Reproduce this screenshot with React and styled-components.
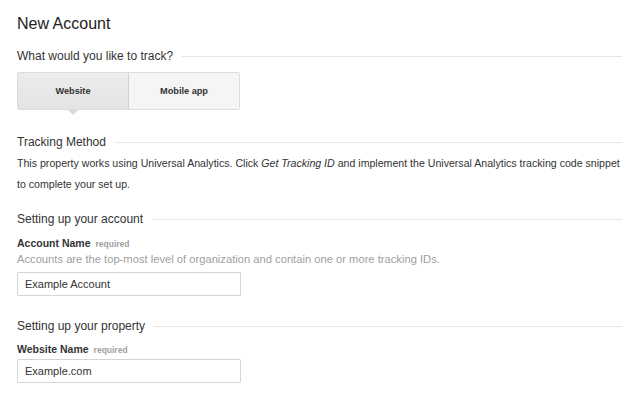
import React from 'react';
import styled, { createGlobalStyle } from 'styled-components';

const GlobalStyle = createGlobalStyle`
    html, body {
        margin: 0;
        padding: 0;
        background: #ffffff;
    }
    body {
        font-family: 'Liberation Sans', Arial, Helvetica, sans-serif;
        color: #333;
    }
`

const trackOptions = [
    { key: 'web', label: 'Website', selected: true },
    { key: 'app', label: 'Mobile app', selected: false },
]

const App = () => {
    return (
        <Page>
            <GlobalStyle />
            <Title>New Account</Title>

            <SectionHeader top={14}>What would you like to track?</SectionHeader>
            <Tabs>
                {
                    trackOptions.map(item => (
                        <Tab key={item.key} selected={item.selected}>
                            {item.label}
                        </Tab>
                    ))
                }
            </Tabs>

            <SectionHeader top={24}>Tracking Method</SectionHeader>
            <Paragraph>
                This property works using Universal Analytics. Click <em>Get Tracking ID</em> and implement the Universal Analytics tracking code snippet<br />
                to complete your set up.
            </Paragraph>

            <SectionHeader top={16}>Setting up your account</SectionHeader>
            <Label top={9}>
                Account Name <Required>required</Required>
            </Label>
            <Hint>Accounts are the top-most level of organization and contain one or more tracking IDs.</Hint>
            <Input top={6} defaultValue="Example Account" />

            <SectionHeader top={22}>Setting up your property</SectionHeader>
            <Label top={8}>
                Website Name <Required>required</Required>
            </Label>
            <Input top={3} defaultValue="Example.com" />
        </Page>
    )
}

export default App;

const Page = styled.div`
    width: 640px;
    height: 400px;
    box-sizing: border-box;
    padding: 14px 18px 0 17px;
    display: flex;
    flex-direction: column;
    align-items: flex-start;
    overflow: hidden;
`

const Title = styled.h1`
    margin: 0;
    font-size: 16px;
    line-height: 20px;
    font-weight: normal;
    color: #222;
`

const SectionHeader = styled.div`
    align-self: stretch;
    margin-top: ${props => props.top}px;
    display: flex;
    align-items: center;
    gap: 9px;
    font-size: 12px;
    line-height: 16px;
    color: #333;
    &::after {
        content: '';
        flex: 1;
        height: 1px;
        background: #e6e6e6;
    }
`

const Tabs = styled.div`
    margin-top: 8px;
    display: flex;
    border: 1px solid #dcdcdc;
    border-radius: 2px;
`

const Tab = styled.div`
    position: relative;
    width: 110px;
    height: 36px;
    display: flex;
    align-items: center;
    justify-content: center;
    font-size: 9.2px;
    font-weight: bold;
    color: #333;
    background: ${props => props.selected ? 'linear-gradient(#ececec, #e3e3e3)' : '#f5f5f5'};
    & + & {
        border-left: 1px solid #d2d2d2;
    }
    &::after {
        content: '';
        display: ${props => props.selected ? 'block' : 'none'};
        position: absolute;
        left: 50%;
        bottom: -6px;
        margin-left: -5px;
        border-left: 5px solid transparent;
        border-right: 5px solid transparent;
        border-top: 5px solid #dadada;
    }
`

const Paragraph = styled.p`
    margin: 3px 0 0;
    font-size: 10.6px;
    line-height: 21px;
    white-space: nowrap;
    color: #333;
    em {
        font-style: italic;
    }
`

const Label = styled.div`
    margin-top: ${props => props.top}px;
    height: 14px;
    display: flex;
    align-items: baseline;
    gap: 5px;
    font-size: 10.5px;
    line-height: 14px;
    font-weight: bold;
    color: #333;
`

const Required = styled.span`
    font-size: 8.5px;
    line-height: 1;
    font-weight: bold;
    color: #a0a0a0;
`

const Hint = styled.div`
    margin-top: 2px;
    font-size: 11.2px;
    line-height: 14px;
    color: #a0a0a0;
`

const Input = styled.input`
    margin-top: ${props => props.top}px;
    width: 224px;
    height: 24px;
    box-sizing: border-box;
    border: 1px solid #d5d5d5;
    border-radius: 1px;
    padding: 0 7px;
    font-family: 'Liberation Sans', Arial, Helvetica, sans-serif;
    font-size: 11px;
    color: #333;
    background: #fff;
    outline: none;
`
